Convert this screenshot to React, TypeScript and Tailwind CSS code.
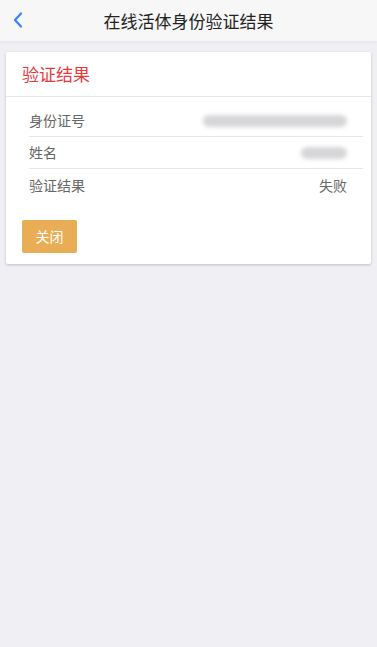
import React from 'react';

const rows = [
  { label: '身份证号', blur: 'w-[144px]' },
  { label: '姓名', blur: 'w-[46px]' },
  { label: '验证结果', value: '失败' },
];

export default function App() {
  return (
    <div
      className="min-h-[647px] bg-[#efeff4]"
      style={{ fontFamily: '"Noto Sans CJK SC", "Noto Sans", sans-serif' }}
    >
      {/* header */}
      <div className="relative flex h-[41px] items-center justify-center bg-[#f7f7f8] shadow-[0_1px_3px_rgba(0,0,0,0.06)]">
        <svg
          className="absolute left-[12px] top-[11px]"
          width="12"
          height="18"
          viewBox="0 0 12 18"
          fill="none"
        >
          <path d="M9 2.5 L3 9 L9 15.5" stroke="#3b82f6" strokeWidth="2.2" strokeLinecap="round" strokeLinejoin="round" />
        </svg>
        <span className="text-[17px] text-[#222]">在线活体身份验证结果</span>
      </div>

      <div className="px-[6px] pt-[11px]">
        <div className="rounded-[2px] bg-white pb-[11px] shadow-[0_1px_3px_rgba(0,0,0,0.2)]">
          <div className="flex h-[45px] items-center border-b border-[#e8e8e8] px-[16px]">
            <span className="text-[17px] text-[#e8383d]">验证结果</span>
          </div>
          <div className="ml-[23px] mr-[8px] pt-[8px]">
            {rows.map((r, i) => (
              <div
                key={r.label}
                className={`flex h-[32px] items-center justify-between pr-[16px] ${i < rows.length - 1 ? 'border-b border-[#e8e8e8]' : ''}`}
              >
                <span className="text-[14px] text-[#666]">{r.label}</span>
                {r.value ? (
                  <span className="text-[14px] text-[#666]">{r.value}</span>
                ) : (
                  <div className={`h-[12px] rounded-full bg-[#d6d6d9] blur-[2px] ${r.blur}`} />
                )}
              </div>
            ))}
          </div>
          <div className="mt-[19px] px-[16px]">
            <button className="h-[33px] w-[55px] rounded-[2px] bg-[#e9ad55] text-[14px] text-white">
              关闭
            </button>
          </div>
        </div>
      </div>
    </div>
  );
}
